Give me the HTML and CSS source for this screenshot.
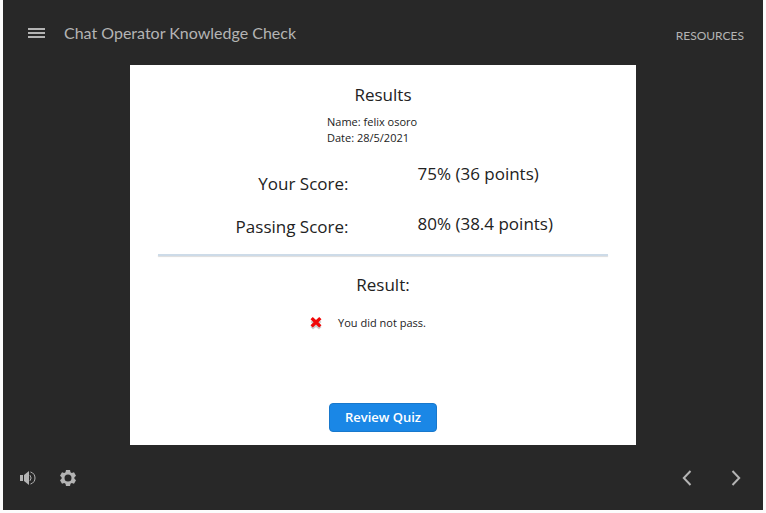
FILE: index.html
```html
<!DOCTYPE html>
<html lang="en">
<head>
<meta charset="utf-8">
<title>Chat Operator Knowledge Check</title>
<meta name="viewport" content="width=device-width, initial-scale=1">
<link rel="stylesheet" href="styles.css">
</head>
<body>
<div class="player">
  <header class="topbar">
    <button class="icon-button" type="button" aria-label="Menu">
      <svg width="17" height="10" viewBox="0 0 17 10" shape-rendering="crispEdges"><path d="M0 0h17v2H0zM0 4h17v2H0zM0 8h17v2H0z"/></svg>
    </button>
    <h1 class="course-title">Chat Operator Knowledge Check</h1>
    <a class="resources" href="#resources">RESOURCES</a>
  </header>

  <main class="slide">
    <h2 class="heading">Results</h2>
    <div class="learner">
      <p>Name: felix osoro</p>
      <p>Date: 28/5/2021</p>
    </div>
    <div class="scores">
      <div class="score-labels">
        <p>Your Score:</p>
        <p>Passing Score:</p>
      </div>
      <div class="score-values">
        <p>75% (36 points)</p>
        <p>80% (38.4 points)</p>
      </div>
    </div>
    <hr class="divider">
    <h2 class="heading">Result:</h2>
    <p class="verdict">
      <svg class="cross" width="12" height="14" viewBox="0 0 12 14" aria-hidden="true">
        <path class="cross-shadow" d="M3 3.5 6 6 9 3.5 11.500 6 8.800 8.500 11.500 11 9 13.500 6 11 3 13.500.5 11 3.200 8.500.5 6z"/>
        <path class="cross-mark" d="M2.800 1 6 4 9.200 1 11.500 3.300 8.400 6.300 11.500 9.300 9.200 11.600 6 8.600 2.800 11.600.5 9.300 3.600 6.300.5 3.300z"/>
      </svg>
      <span>You did not pass.</span>
    </p>
    <button class="review" type="button">Review Quiz</button>
  </main>

  <footer class="controls">
    <div class="control-group">
      <button class="icon-button" type="button" aria-label="Volume">
        <svg width="16" height="14" viewBox="0 0 16 14"><path d="M0 4h3v6H0zM4 4l5-4v14l-5-4z"/><path class="stroke thin" d="M10 4.200q2.200 2.800 0 5.600M10.500 1c6 1.500 6 10.500 0 12"/></svg>
      </button>
      <button class="icon-button" type="button" aria-label="Settings">
        <svg width="16" height="16" viewBox="0 0 16 16"><path fill-rule="evenodd" d="M6 0h4l.5 2.200 1.300.7 2.200-.7 2 3.500L14.400 7.200v1.600L16 10.300l-2 3.500-2.200-.7-1.300.7L10 16H6l-.5-2.200-1.300-.7-2.200.7-2-3.500 1.600-1.500V7.200L0 5.700l2-3.500 2.200.7 1.300-.7zM8 4.500a3.500 3.500 0 1 0 0 7 3.500 3.500 0 0 0 0-7z"/></svg>
      </button>
    </div>
    <div class="control-group nav">
      <button class="icon-button" type="button" aria-label="Previous">
        <svg width="10" height="16" viewBox="0 0 10 16"><path class="stroke" d="M8.500 1 1.800 8l6.700 7"/></svg>
      </button>
      <button class="icon-button" type="button" aria-label="Next">
        <svg width="10" height="16" viewBox="0 0 10 16"><path class="stroke" d="M1.500 1 8.200 8l-6.700 7"/></svg>
      </button>
    </div>
  </footer>
</div>
</body>
</html>
```
FILE: styles.css
```css
* {
  box-sizing: border-box;
}

body {
  margin: 0;
  padding: 0 3px 3px;
  background: #fcfcfc;
  font-family: "Open Sans", sans-serif;
}

h1,
h2,
p {
  margin: 0;
  font-weight: 400;
}

.player {
  display: grid;
  grid-template-rows: 65px 1fr 65px;
  min-height: calc(100vh - 3px);
  background: #282828;
  color: #b4b4b4;
}

.topbar {
  display: flex;
  align-items: center;
  padding: 0 19px 0 25px;
  font-family: Lato, sans-serif;
}

.icon-button {
  display: flex;
  padding: 0;
  border: 0;
  background: none;
  color: inherit;
}

.icon-button svg {
  fill: currentColor;
}

.icon-button .stroke {
  fill: none;
  stroke: currentColor;
  stroke-width: 2;
}

.icon-button .thin {
  stroke-width: 1;
}

.course-title {
  flex: 1;
  margin-left: 19px;
  font-size: 16px;
  line-height: 20px;
}

.resources {
  margin-top: 6px;
  color: inherit;
  font-size: 12px;
  line-height: 16px;
  text-decoration: none;
}

.slide {
  display: flex;
  flex-direction: column;
  width: 66.7%;
  margin: 0 auto;
  padding: 18px 28px 13px;
  background: #fff;
  color: #222;
  font-size: 17px;
  line-height: 24px;
}

.heading {
  font-size: 17px;
  line-height: 24px;
  text-align: center;
}

.learner {
  width: 112px;
  margin: 7px auto 0;
  font-size: 11px;
  line-height: 16px;
}

.scores {
  display: grid;
  grid-template-columns: 191fr 191fr;
  column-gap: 69px;
  margin-top: 16px;
}

.score-labels,
.score-values {
  display: flex;
  flex-direction: column;
}

.score-labels {
  gap: 19px;
  padding-top: 10px;
  text-align: right;
}

.score-values {
  gap: 26px;
}

.divider {
  width: 100%;
  height: 2px;
  margin: 15px 0 17px;
  border: 0;
  background: #cddbe8;
  box-shadow: 0 1px 1px #ddd;
}

.verdict {
  display: flex;
  align-items: center;
  justify-content: center;
  gap: 16px;
  margin: 18px 30px 0 0;
  font-size: 11px;
  line-height: 16px;
}

.cross-mark {
  fill: #f00808;
}

.cross-shadow {
  fill: #ccc;
}

.review {
  align-self: center;
  margin-top: auto;
  padding: 0 15px;
  border: 1px solid #1878cc;
  border-radius: 4px;
  background: #1a87e6;
  color: #fff;
  font: 600 13px/27px "Open Sans", sans-serif;
}

.controls {
  display: flex;
  justify-content: space-between;
  align-items: center;
  padding: 0 22px 0 17px;
}

.control-group {
  display: flex;
  align-items: center;
  gap: 24px;
}

.nav {
  gap: 39px;
}
```
